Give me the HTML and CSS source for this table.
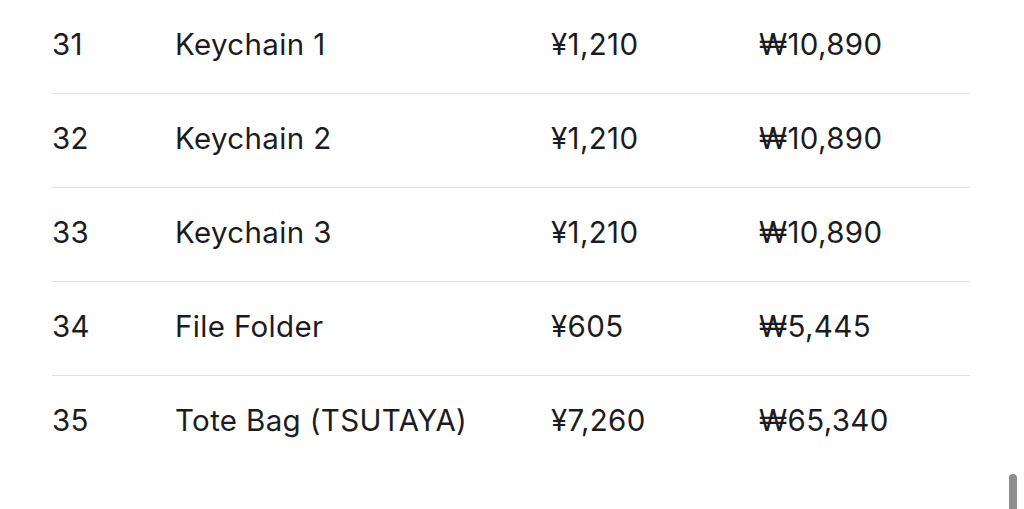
FILE: index.html
```html
<!DOCTYPE html>
<html lang="en">
<head>
<meta charset="utf-8">
<link rel="stylesheet" href="styles.css">
</head>
<body>
<div class="list">
  <div class="row"><span class="num">31</span><span class="name">Keychain 1</span><span class="jpy">¥1,210</span><span class="krw">₩10,890</span></div>
  <div class="row"><span class="num">32</span><span class="name">Keychain 2</span><span class="jpy">¥1,210</span><span class="krw">₩10,890</span></div>
  <div class="row"><span class="num">33</span><span class="name">Keychain 3</span><span class="jpy">¥1,210</span><span class="krw">₩10,890</span></div>
  <div class="row"><span class="num">34</span><span class="name">File Folder</span><span class="jpy">¥605</span><span class="krw">₩5,445</span></div>
  <div class="row last"><span class="num">35</span><span class="name">Tote Bag (TSUTAYA)</span><span class="jpy">¥7,260</span><span class="krw">₩65,340</span></div>
</div>
<div class="scrollbar"></div>
</body>
</html>
```
FILE: styles.css
```css
html, body {
  margin: 0;
  padding: 0;
  background: #ffffff;
  height: 509px;
  overflow: hidden;
}
body {
  font-family: Inter, "Noto Sans", sans-serif;
  color: #1c1c1e;
  position: relative;
}
.list {
  width: 918px;
  margin: 0 0 0 52px;
}
.row {
  display: grid;
  grid-template-columns: 123px 376px 208px 1fr;
  align-items: center;
  height: 94px;
  padding-bottom: 6px;
  border-bottom: 1px solid #e0e0e0;
  box-sizing: border-box;
  font-size: 29.5px;
  letter-spacing: 0.35px;
}
.row.last {
  border-bottom: none;
}
.scrollbar {
  position: absolute;
  left: 1009px;
  top: 474px;
  width: 8px;
  height: 40px;
  border-radius: 4px;
  background: #8e8e8e;
}
```
